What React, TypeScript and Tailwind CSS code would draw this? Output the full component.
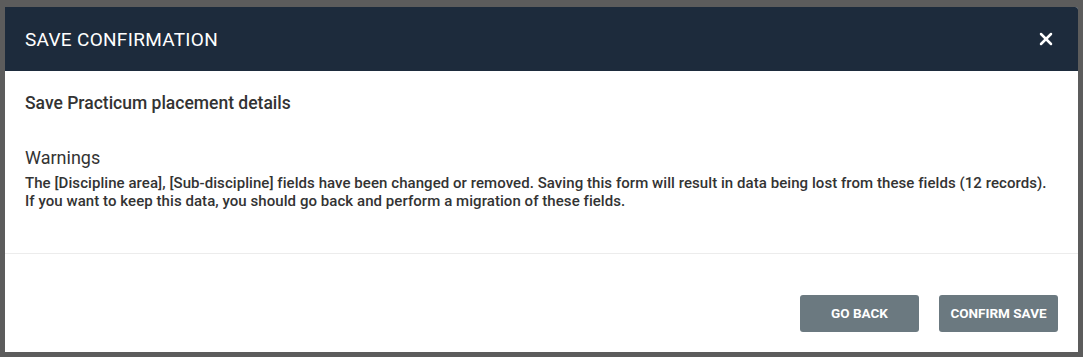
import { X } from "lucide-react";

const App = () => {
  return (
    <div className="w-[1083px] h-[357px] bg-[#5c5c5c] pt-[7px] pl-[5px] font-['Roboto',sans-serif]">
      <div className="w-[1073px] h-[345px] bg-white flex flex-col rounded-tr-[3px] overflow-hidden">
        {/* Header */}
        <div className="h-[64px] shrink-0 bg-[#1d2b3c] flex items-center justify-between pl-[20px] pr-[22px]">
          <h2 className="text-white text-[19px] tracking-[0.3px] leading-none">SAVE CONFIRMATION</h2>
          <button className="text-white">
            <X size={20} strokeWidth={3} />
          </button>
        </div>

        {/* Body */}
        <div className="h-[183px] shrink-0 px-[20px] pt-[22px] border-b border-[#ececec] text-[#333]">
          <p className="text-[17.5px] font-medium leading-[20px]">Save Practicum placement details</p>
          <p className="mt-[35px] text-[18px] leading-[20px]">Warnings</p>
          <p className="mt-[6px] text-[15px] font-medium leading-[18px] tracking-[0.06px]">
            The [Discipline area], [Sub-discipline] fields have been changed or removed. Saving this form will result in data being lost from these fields (12 records).
            <br />
            If you want to keep this data, you should go back and perform a migration of these fields.
          </p>
        </div>

        {/* Footer */}
        <div className="flex-1 flex items-start justify-end gap-[20px] pt-[41px] pr-[20px]">
          <button className="w-[119px] h-[37px] rounded-[3px] bg-[#6b7980] text-white text-[13.5px] font-bold">
            GO BACK
          </button>
          <button className="w-[119px] h-[37px] rounded-[3px] bg-[#6b7980] text-white text-[13.5px] font-bold">
            CONFIRM SAVE
          </button>
        </div>
      </div>
    </div>
  );
};

export default App;
